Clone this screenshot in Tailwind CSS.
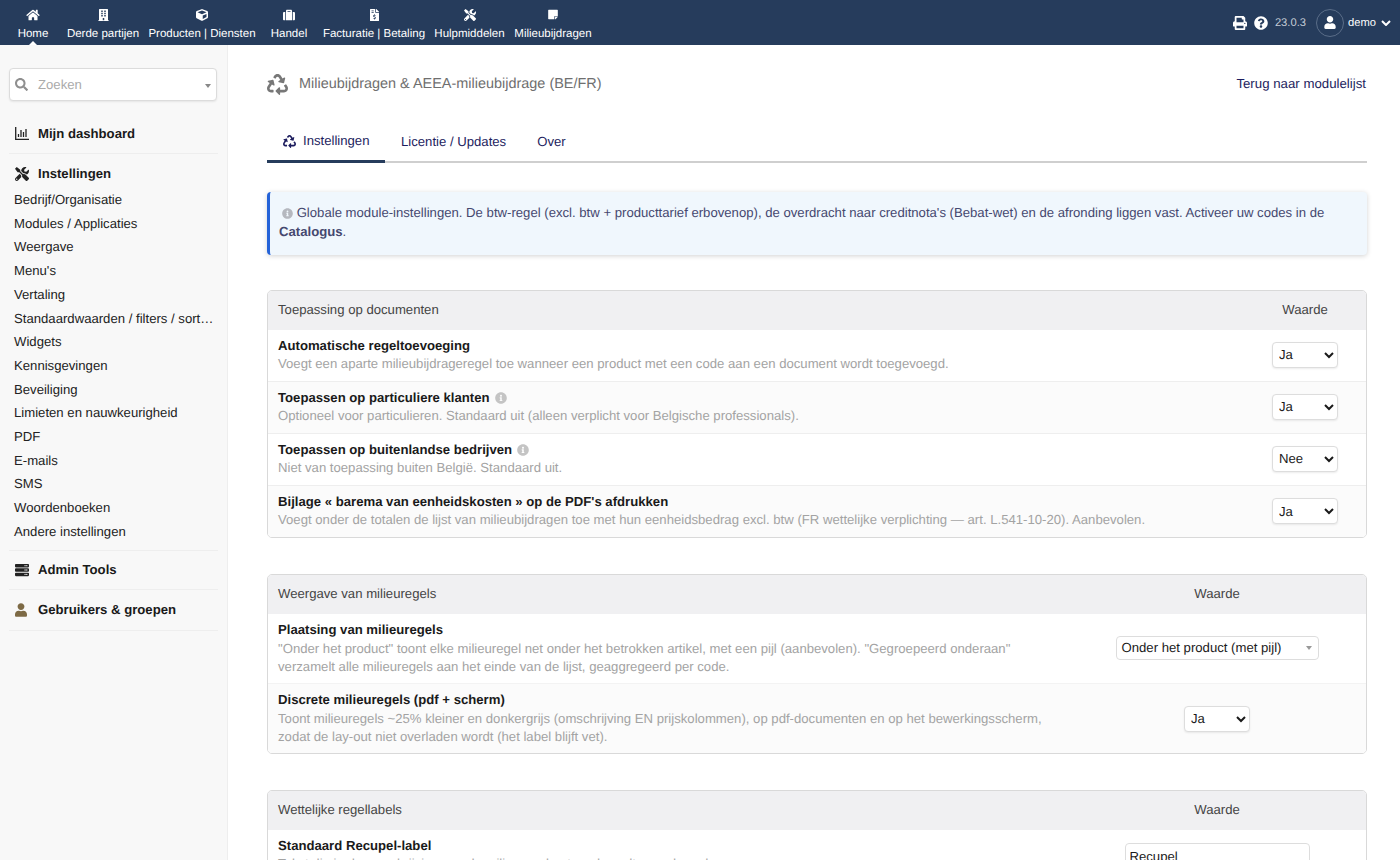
<!DOCTYPE html>
<html lang="nl">
<head>
<meta charset="utf-8">
<title>Milieubijdragen</title>
<script src="https://cdn.jsdelivr.net/npm/@tailwindcss/browser@4"></script>
</head>
<body class="h-[860px] w-[1400px] overflow-hidden bg-white font-['Liberation_Sans',Arial,sans-serif] text-[13.15px] text-[#1a1a1a] [text-rendering:geometricPrecision]">
<header class="flex h-[45px] items-start justify-between bg-[#263c5c] text-white">
  <nav class="ml-2 flex text-[11.5px]">
    <a class="relative flex h-[45px] w-[50px] flex-col items-center pt-[9px]">
      <svg class="h-[12px] w-[14px] fill-white" viewBox="0 0 576 512"><path d="M280.37 148.26L96 300.11V464a16 16 0 0 0 16 16l112.06-.29a16 16 0 0 0 15.92-16V368a16 16 0 0 1 16-16h64a16 16 0 0 1 16 16v95.64a16 16 0 0 0 16 16.05L464 480a16 16 0 0 0 16-16V300L295.67 148.26a12.19 12.19 0 0 0-15.3 0zM571.6 251.47L488 182.56V44.05a12 12 0 0 0-12-12h-56a12 12 0 0 0-12 12v72.61L318.47 43a48 48 0 0 0-61 0L4.34 251.47a12 12 0 0 0-1.6 16.9l25.5 31A12 12 0 0 0 45.15 301l235.22-193.74a12.19 12.19 0 0 1 15.3 0L530.9 301a12 12 0 0 0 16.9-1.6l25.5-31a12 12 0 0 0-1.7-16.93z"/></svg>
      <span class="mt-[5px] leading-[16px]">Home</span>
      <span class="absolute bottom-0 left-1/2 -ml-[4px] h-0 w-0 border-x-[4px] border-b-[4px] border-x-transparent border-b-white"></span>
    </a>
    <a class="flex h-[45px] w-[90px] flex-col items-center pt-[9px]">
      <svg class="h-[12px] w-[11px] fill-white" viewBox="0 0 448 512"><path d="M436 480h-20V24c0-13.255-10.745-24-24-24H56C42.745 0 32 10.745 32 24v456H12c-6.627 0-12 5.373-12 12v20h448v-20c0-6.627-5.373-12-12-12zM128 76c0-6.627 5.373-12 12-12h40c6.627 0 12 5.373 12 12v40c0 6.627-5.373 12-12 12h-40c-6.627 0-12-5.373-12-12V76zm0 96c0-6.627 5.373-12 12-12h40c6.627 0 12 5.373 12 12v40c0 6.627-5.373 12-12 12h-40c-6.627 0-12-5.373-12-12v-40zm52 148h-40c-6.627 0-12-5.373-12-12v-40c0-6.627 5.373-12 12-12h40c6.627 0 12 5.373 12 12v40c0 6.627-5.373 12-12 12zm76 160h-64v-84c0-6.627 5.373-12 12-12h40c6.627 0 12 5.373 12 12v84zm64-172c0 6.627-5.373 12-12 12h-40c-6.627 0-12-5.373-12-12v-40c0-6.627 5.373-12 12-12h40c6.627 0 12 5.373 12 12v40zm0-96c0 6.627-5.373 12-12 12h-40c-6.627 0-12-5.373-12-12v-40c0-6.627 5.373-12 12-12h40c6.627 0 12 5.373 12 12v40zm0-96c0 6.627-5.373 12-12 12h-40c-6.627 0-12-5.373-12-12V76c0-6.627 5.373-12 12-12h40c6.627 0 12 5.373 12 12v40z"/></svg>
      <span class="mt-[5px] leading-[16px]">Derde partijen</span>
    </a>
    <a class="flex h-[45px] w-[108px] flex-col items-center pt-[9px]">
      <svg class="h-[12px] w-[12px] fill-white" viewBox="0 0 512 512"><path d="M239.1 6.3l-208 78c-18.7 7-31.1 25-31.1 45v225.1c0 18.2 10.3 34.8 26.5 42.9l208 104c13.5 6.8 29.4 6.8 42.9 0l208-104c16.3-8.1 26.5-24.8 26.5-42.9V129.3c0-20-12.4-37.9-31.1-44.9l-208-78C262 2.2 250 2.2 239.1 6.3zM256 68.4l192 72v1.1l-192 78-192-78v-1.1l192-72zm32 356V275.5l160-65v133.9l-160 80z"/></svg>
      <span class="mt-[5px] leading-[16px] whitespace-nowrap">Producten | Diensten</span>
    </a>
    <a class="flex h-[45px] w-[66px] flex-col items-center pt-[9px]">
      <svg class="h-[12px] w-[12px] fill-white" viewBox="0 0 512 512"><path d="M128 480h256V80c0-26.5-21.5-48-48-48H176c-26.5 0-48 21.5-48 48v400zm64-384h128v32H192V96zm320 80v256c0 26.5-21.5 48-48 48h-48V128h48c26.5 0 48 21.5 48 48zM96 480H48c-26.5 0-48-21.5-48-48V176c0-26.5 21.5-48 48-48h48v352z"/></svg>
      <span class="mt-[5px] leading-[16px]">Handel</span>
    </a>
    <a class="flex h-[45px] w-[104px] flex-col items-center pt-[9px]">
      <svg class="h-[12px] w-[9px] fill-white" viewBox="0 0 384 512"><path d="M377 105L279.1 7c-4.5-4.5-10.6-7-17-7H256v128h128v-6.1c0-6.3-2.5-12.4-7-16.9zM224 136V0H24C10.7 0 0 10.7 0 24v464c0 13.3 10.7 24 24 24h336c13.3 0 24-10.7 24-24V160H248c-13.2 0-24-10.8-24-24zM64 72c0-4.42 3.58-8 8-8h80c4.42 0 8 3.58 8 8v16c0 4.42-3.58 8-8 8H72c-4.42 0-8-3.58-8-8V72zm0 80v-16c0-4.42 3.58-8 8-8h80c4.42 0 8 3.58 8 8v16c0 4.42-3.58 8-8 8H72c-4.42 0-8-3.58-8-8zm144 263.88V440c0 4.42-3.58 8-8 8h-16c-4.42 0-8-3.58-8-8v-24.29c-11.29-.58-22.27-4.52-31.37-11.35-3.9-2.93-4.1-8.77-.57-12.14l11.75-11.21c2.77-2.64 6.89-2.76 10.13-.73 3.87 2.42 8.26 3.72 12.82 3.72h28.11c6.5 0 11.8-5.92 11.8-13.19 0-5.95-3.61-11.19-8.77-12.73l-45-13.5c-18.59-5.58-31.58-23.42-31.58-43.39 0-24.52 19.05-44.44 42.67-45.07V232c0-4.42 3.58-8 8-8h16c4.42 0 8 3.58 8 8v24.29c11.29.58 22.27 4.51 31.37 11.35 3.9 2.93 4.1 8.77.57 12.14l-11.75 11.21c-2.77 2.64-6.89 2.76-10.13.73-3.87-2.43-8.26-3.72-12.82-3.72h-28.11c-6.5 0-11.8 5.92-11.8 13.19 0 5.95 3.61 11.19 8.77 12.73l45 13.5c18.59 5.58 31.58 23.42 31.58 43.39 0 24.53-19.05 44.44-42.67 45.07z"/></svg>
      <span class="mt-[5px] leading-[16px] whitespace-nowrap">Facturatie | Betaling</span>
    </a>
    <a class="flex h-[45px] w-[87px] flex-col items-center pt-[9px]">
      <svg class="h-[12px] w-[12px] fill-white" viewBox="0 0 512 512"><path d="M501.1 395.7L384 278.6c-23.1-23.1-57.6-27.6-85.4-13.9L192 158.1V96L64 0 0 64l96 128h62.1l106.6 106.6c-13.6 27.8-9.2 62.3 13.9 85.4l117.1 117.1c14.6 14.6 38.2 14.6 52.7 0l52.7-52.7c14.5-14.6 14.5-38.2 0-52.7zM331.7 225c28.3 0 54.9 11 74.9 31l19.4 19.4c15.8-6.9 30.8-16.5 43.8-29.5 37.1-37.1 49.7-89.3 37.9-136.7-2.2-9-13.5-12.1-20.1-5.5l-74.4 74.4-67.9-11.3L334 98.9l74.4-74.4c6.6-6.6 3.4-17.9-5.7-20.2-47.4-11.7-99.6.9-136.6 37.9-28.5 28.5-41.9 66.1-41.2 103.6l82.1 82.1c8.1-1.9 16.5-2.9 24.7-2.9zm-103.9 82l-56.7-56.7L18.7 402.8c-25 25-25 65.5 0 90.5s65.5 25 90.5 0l123.6-123.6c-7.6-19.9-9.9-41.6-5-62.7zM64 472c-13.2 0-24-10.8-24-24 0-13.3 10.7-24 24-24s24 10.7 24 24c0 13.2-10.7 24-24 24z"/></svg>
      <span class="mt-[5px] leading-[16px]">Hulpmiddelen</span>
    </a>
    <a class="flex h-[45px] w-[80px] flex-col items-center pt-[9px]">
      <svg class="h-[11px] w-[10px] fill-white" viewBox="0 0 448 512"><path d="M312 320h136V56c0-13.3-10.7-24-24-24H24C10.7 32 0 42.7 0 56v400c0 13.3 10.7 24 24 24h264V344c0-13.2 10.8-24 24-24zm129 55l-98 98c-4.5 4.5-10.6 7-17 7h-6V352h128v6.1c0 6.3-2.5 12.4-7 16.9z"/></svg>
      <span class="mt-[6px] leading-[16px]">Milieubijdragen</span>
    </a>
  </nav>
  <div class="flex h-[45px] items-center pr-[9px]">
    <svg class="h-[14px] w-[14px] fill-white" viewBox="0 0 512 512"><path d="M448 192V77.25c0-8.49-3.37-16.62-9.37-22.63L393.37 9.37c-6-6-14.14-9.37-22.63-9.37H96C78.33 0 64 14.33 64 32v160c-35.35 0-64 28.65-64 64v112c0 8.84 7.16 16 16 16h48v96c0 17.67 14.33 32 32 32h320c17.67 0 32-14.33 32-32v-96h48c8.84 0 16-7.16 16-16V256c0-35.35-28.65-64-64-64zm-64 256H128v-96h256v96zm0-224H128V64h192v48c0 8.84 7.16 16 16 16h48v96zm48 72c-13.25 0-24-10.75-24-24 0-13.26 10.75-24 24-24s24 10.74 24 24c0 13.25-10.75 24-24 24z"/></svg>
    <svg class="ml-[7px] h-[14px] w-[14px] fill-white" viewBox="0 0 512 512"><path d="M504 256c0 136.997-111.043 248-248 248S8 392.997 8 256C8 119.083 119.043 8 256 8s248 111.083 248 248zM262.655 90c-54.497 0-89.255 22.957-116.549 63.758-3.536 5.286-2.353 12.415 2.715 16.258l34.699 26.31c5.205 3.947 12.621 3.008 16.665-2.122 17.864-22.658 30.113-35.797 57.303-35.797 20.429 0 45.698 13.148 45.698 32.958 0 14.976-12.363 22.667-32.534 33.976C247.128 238.528 216 254.941 216 296v4c0 6.627 5.373 12 12 12h56c6.627 0 12-5.373 12-12v-1.333c0-28.462 83.186-29.647 83.186-106.667 0-58.002-60.165-102-116.531-102zM256 338c-25.365 0-46 20.635-46 46 0 25.364 20.635 46 46 46s46-20.636 46-46c0-25.365-20.635-46-46-46z"/></svg>
    <span class="ml-[7px] mt-[1px] text-[11.2px] text-[#c3cad5]">23.0.3</span>
    <span class="ml-[10px] flex h-[28px] w-[28px] items-center justify-center rounded-full border border-[#5a6d88]">
      <svg class="h-[13px] w-[12px] fill-white" viewBox="0 0 448 512"><path d="M224 256c70.7 0 128-57.3 128-128S294.7 0 224 0 96 57.3 96 128s57.3 128 128 128zm89.6 32h-16.7c-22.2 10.2-46.9 16-72.9 16s-50.6-5.8-72.9-16h-16.7C60.2 288 0 348.2 0 422.4V464c0 26.5 21.5 48 48 48h352c26.5 0 48-21.5 48-48v-41.6c0-74.2-60.2-134.4-134.4-134.4z"/></svg>
    </span>
    <span class="ml-[4px] mt-[2px] text-[11.2px]">demo</span>
    <svg class="ml-[5px] h-[6px] w-[10px] stroke-white stroke-[2] fill-none" viewBox="0 0 10 6"><path d="M1 1l4 4 4-4"/></svg>
  </div>
</header>
<div class="flex h-[815px]">
  <aside class="h-full w-[228px] shrink-0 border-r border-[#eeeeee] bg-[#f8f8f8] px-[9px] pt-[23px]">
    <div class="flex h-[33px] w-[208px] items-center rounded-[4px] border border-[#dcdcdc] bg-white shadow-[0_1px_2px_rgba(0,0,0,0.08)]">
      <svg class="ml-[5px] h-[13px] w-[13px] fill-[#8f8f8f]" viewBox="0 0 512 512"><path d="M505 442.7L405.3 343c-4.5-4.5-10.6-7-17-7H372c27.6-35.3 44-79.7 44-128C416 93.1 322.9 0 208 0S0 93.1 0 208s93.1 208 208 208c48.3 0 92.7-16.4 128-44v16.3c0 6.4 2.5 12.5 7 17l99.7 99.7c9.4 9.4 24.6 9.4 33.9 0l28.3-28.3c9.4-9.4 9.4-24.6.1-34zM208 336c-70.7 0-128-57.2-128-128 0-70.7 57.2-128 128-128 70.7 0 128 57.2 128 128 0 70.7-57.2 128-128 128z"/></svg>
      <span class="ml-[10px] flex-1 text-[#aaaaaa]">Zoeken</span>
      <span class="mr-[5px] mt-[2px] h-0 w-0 border-x-[3.5px] border-t-[4px] border-x-transparent border-t-[#888888]"></span>
    </div>
    <div class="mt-[13px] flex h-[40px] items-center border-b border-[#eeeeee] font-bold">
      <svg class="ml-[6px] h-[13px] w-[14px] stroke-[#222222] fill-none stroke-[1.3]" viewBox="0 0 14 13"><path d="M.7 0v12.3H14M3.5 10V7M6 10V3M8.5 10V5M11 10V2"/></svg>
      <span class="ml-[9px]">Mijn dashboard</span>
    </div>
    <div class="flex h-[40px] items-center font-bold">
      <svg class="ml-[6px] h-[14px] w-[14px] fill-[#222222]" viewBox="0 0 512 512"><path d="M501.1 395.7L384 278.6c-23.1-23.1-57.6-27.6-85.4-13.9L192 158.1V96L64 0 0 64l96 128h62.1l106.6 106.6c-13.6 27.8-9.2 62.3 13.9 85.4l117.1 117.1c14.6 14.6 38.2 14.6 52.7 0l52.7-52.7c14.5-14.6 14.5-38.2 0-52.7zM331.7 225c28.3 0 54.9 11 74.9 31l19.4 19.4c15.8-6.9 30.8-16.5 43.8-29.5 37.1-37.1 49.7-89.3 37.9-136.7-2.2-9-13.5-12.1-20.1-5.5l-74.4 74.4-67.9-11.3L334 98.9l74.4-74.4c6.6-6.6 3.4-17.9-5.7-20.2-47.4-11.7-99.6.9-136.6 37.9-28.5 28.5-41.9 66.1-41.2 103.6l82.1 82.1c8.1-1.9 16.5-2.9 24.7-2.9zm-103.9 82l-56.7-56.7L18.7 402.8c-25 25-25 65.5 0 90.5s65.5 25 90.5 0l123.6-123.6c-7.6-19.9-9.9-41.6-5-62.7zM64 472c-13.2 0-24-10.8-24-24 0-13.3 10.7-24 24-24s24 10.7 24 24c0 13.2-10.7 24-24 24z"/></svg>
      <span class="ml-[9px]">Instellingen</span>
    </div>
    <ul class="-mt-[6px] pb-[6px] pl-[5px] leading-[23.7px] text-[#222222]">
      <li>Bedrijf/Organisatie</li>
      <li>Modules / Applicaties</li>
      <li>Weergave</li>
      <li>Menu's</li>
      <li>Vertaling</li>
      <li class="w-[200px] truncate">Standaardwaarden / filters / sorteren</li>
      <li>Widgets</li>
      <li>Kennisgevingen</li>
      <li>Beveiliging</li>
      <li>Limieten en nauwkeurigheid</li>
      <li>PDF</li>
      <li>E-mails</li>
      <li>SMS</li>
      <li>Woordenboeken</li>
      <li>Andere instellingen</li>
    </ul>
    <div class="flex h-[40px] items-center border-y border-[#eeeeee] font-bold">
      <svg class="ml-[6px] h-[14px] w-[14px] fill-[#222222]" viewBox="0 0 512 512"><path d="M480 160H32c-17.673 0-32-14.327-32-32V64c0-17.673 14.327-32 32-32h448c17.673 0 32 14.327 32 32v64c0 17.673-14.327 32-32 32zm-48-88c-13.255 0-24 10.745-24 24s10.745 24 24 24 24-10.745 24-24-10.745-24-24-24zm-64 0c-13.255 0-24 10.745-24 24s10.745 24 24 24 24-10.745 24-24-10.745-24-24-24zm112 248H32c-17.673 0-32-14.327-32-32v-64c0-17.673 14.327-32 32-32h448c17.673 0 32 14.327 32 32v64c0 17.673-14.327 32-32 32zm-48-88c-13.255 0-24 10.745-24 24s10.745 24 24 24 24-10.745 24-24-10.745-24-24-24zm-64 0c-13.255 0-24 10.745-24 24s10.745 24 24 24 24-10.745 24-24-10.745-24-24-24zm112 248H32c-17.673 0-32-14.327-32-32v-64c0-17.673 14.327-32 32-32h448c17.673 0 32 14.327 32 32v64c0 17.673-14.327 32-32 32zm-48-88c-13.255 0-24 10.745-24 24s10.745 24 24 24 24-10.745 24-24-10.745-24-24-24zm-64 0c-13.255 0-24 10.745-24 24s10.745 24 24 24 24-10.745 24-24-10.745-24-24-24z"/></svg>
      <span class="ml-[9px]">Admin Tools</span>
    </div>
    <div class="flex h-[41px] items-center border-b border-[#eeeeee] font-bold">
      <svg class="ml-[6px] h-[14px] w-[12px] fill-[#7d6a45]" viewBox="0 0 448 512"><path d="M224 256c70.7 0 128-57.3 128-128S294.7 0 224 0 96 57.3 96 128s57.3 128 128 128zm89.6 32h-16.7c-22.2 10.2-46.9 16-72.9 16s-50.6-5.8-72.9-16h-16.7C60.2 288 0 348.2 0 422.4V464c0 26.5 21.5 48 48 48h352c26.5 0 48-21.5 48-48v-41.6c0-74.2-60.2-134.4-134.4-134.4z"/></svg>
      <span class="ml-[11px]">Gebruikers &amp; groepen</span>
    </div>
  </aside>
  <main class="h-full min-w-0 flex-1 overflow-hidden pl-[39px] pr-[33px]">
    <div class="flex h-[78px] items-center justify-between pt-[2px]">
      <div class="flex items-center">
        <svg class="h-[21px] w-[21px] fill-[#777777]" viewBox="0 0 512 512"><path d="M184.561 261.903c3.232 13.997-12.123 24.635-24.068 17.168l-40.736-25.455-50.867 81.402C55.606 356.273 70.96 384 96.012 384H148c6.627 0 12 5.373 12 12v40c0 6.627-5.373 12-12 12H96.115c-75.334 0-121.302-83.048-81.408-146.88l50.822-81.388-40.725-25.448c-12.081-7.547-8.966-25.961 4.879-29.158l110.237-25.45c8.611-1.988 17.201 3.381 19.189 11.99l25.451 110.237zm98.561-182.915l41.289 66.076-40.74 25.457c-12.051 7.528-9 25.953 4.879 29.158l110.237 25.45c8.672 1.999 17.215-3.438 19.189-11.99l25.45-110.237c3.197-13.844-11.99-24.719-24.068-17.168l-40.687 25.424-41.263-66.082c-37.521-60.033-125.209-60.171-162.816 0l-17.963 28.766c-3.51 5.62-1.8 13.021 3.82 16.533l33.919 21.195c5.62 3.512 13.024 1.803 16.536-3.817l17.961-28.743c12.712-20.341 41.973-19.676 54.257-.022zM497.288 301.12l-27.515-44.065c-3.511-5.623-10.916-7.334-16.538-3.821l-33.861 21.159c-5.62 3.512-7.33 10.915-3.818 16.536l27.564 44.112c13.257 21.211-2.057 48.96-27.136 48.96H320V336.02c0-14.213-17.242-21.383-27.313-11.313l-80 79.981c-6.249 6.248-6.249 16.379 0 22.627l80 79.989C302.689 517.308 320 510.3 320 495.989V448h95.88c75.274 0 121.335-82.997 81.408-146.88z"/></svg>
        <span class="ml-[11px] text-[14.45px] text-[#6f6f6f]">Milieubijdragen &amp; AEEA-milieubijdrage (BE/FR)</span>
      </div>
      <a class="mb-[3px] mr-[1px] text-[13.25px] text-[#1d1d5e]">Terug naar modulelijst</a>
    </div>
    <div class="flex h-[40px] items-end border-b-2 border-[#cfcfcf] text-[#1d1d5e]">
      <a class="-mb-[2px] flex h-[41px] w-[118px] items-center border-b-[3px] border-[#263c5c] pl-[16px]">
        <svg class="h-[13px] w-[13px] fill-[#1d1d5e]" viewBox="0 0 512 512"><path d="M184.561 261.903c3.232 13.997-12.123 24.635-24.068 17.168l-40.736-25.455-50.867 81.402C55.606 356.273 70.96 384 96.012 384H148c6.627 0 12 5.373 12 12v40c0 6.627-5.373 12-12 12H96.115c-75.334 0-121.302-83.048-81.408-146.88l50.822-81.388-40.725-25.448c-12.081-7.547-8.966-25.961 4.879-29.158l110.237-25.45c8.611-1.988 17.201 3.381 19.189 11.99l25.451 110.237zm98.561-182.915l41.289 66.076-40.74 25.457c-12.051 7.528-9 25.953 4.879 29.158l110.237 25.45c8.672 1.999 17.215-3.438 19.189-11.99l25.45-110.237c3.197-13.844-11.99-24.719-24.068-17.168l-40.687 25.424-41.263-66.082c-37.521-60.033-125.209-60.171-162.816 0l-17.963 28.766c-3.51 5.62-1.8 13.021 3.82 16.533l33.919 21.195c5.62 3.512 13.024 1.803 16.536-3.817l17.961-28.743c12.712-20.341 41.973-19.676 54.257-.022zM497.288 301.12l-27.515-44.065c-3.511-5.623-10.916-7.334-16.538-3.821l-33.861 21.159c-5.62 3.512-7.33 10.915-3.818 16.536l27.564 44.112c13.257 21.211-2.057 48.96-27.136 48.96H320V336.02c0-14.213-17.242-21.383-27.313-11.313l-80 79.981c-6.249 6.248-6.249 16.379 0 22.627l80 79.989C302.689 517.308 320 510.3 320 495.989V448h95.88c75.274 0 121.335-82.997 81.408-146.88z"/></svg>
        <span class="ml-[7px]">Instellingen</span>
      </a>
      <a class="flex h-[39px] items-center pl-[16px]">Licentie / Updates</a>
      <a class="flex h-[39px] items-center pl-[31px]">Over</a>
    </div>
    <div class="mt-[29px] rounded-[4px] border-l-[3px] border-[#2563d8] bg-[#f0f7fd] pb-[14px] pl-[9px] pr-[20px] pt-[11px] leading-[19px] text-[#45486f] shadow-[0_1px_5px_rgba(0,0,0,0.18)]">
      <svg class="mb-[1px] ml-[3px] inline h-[11px] w-[11px] fill-[#b5b8bf]" viewBox="0 0 512 512"><path d="M256 8C119.043 8 8 119.083 8 256c0 136.997 111.043 248 248 248s248-111.003 248-248C504 119.083 392.957 8 256 8zm0 110c23.196 0 42 18.804 42 42s-18.804 42-42 42-42-18.804-42-42 18.804-42 42-42zm56 254c0 6.627-5.373 12-12 12h-88c-6.627 0-12-5.373-12-12v-24c0-6.627 5.373-12 12-12h12v-64h-12c-6.627 0-12-5.373-12-12v-24c0-6.627 5.373-12 12-12h64c6.627 0 12 5.373 12 12v100h12c6.627 0 12 5.373 12 12v24z"/></svg>
      Globale module-instellingen. De btw-regel (excl. btw + producttarief erbovenop), de overdracht naar creditnota's (Bebat-wet) en de afronding liggen vast. Activeer uw codes in de <b>Catalogus</b>.
    </div>

    <section class="mt-[35px] overflow-hidden rounded-[5px] border border-[#d9d9d9]">
      <div class="flex h-[39px] items-center bg-[#f0f0f2] pb-[1px] text-[#444444]">
        <span class="flex-1 pl-[10px]">Toepassing op documenten</span>
        <span class="w-[122px] text-center">Waarde</span>
      </div>
      <div class="flex h-[52px] border-b border-[#eeeeee] bg-white">
        <div class="flex-1 pl-[10px] pt-[7px] leading-[18px]"><b>Automatische regeltoevoeging</b><p class="text-[#a3a3a3]">Voegt een aparte milieubijdrageregel toe wanneer een product met een code aan een document wordt toegevoegd.</p></div>
        <div class="flex w-[122px] items-center justify-center pb-[2px]"><select class="h-[26px] w-[66px] rounded-[4px] border border-[#dddddd] bg-white pl-[2px] shadow-[0_1px_2px_rgba(0,0,0,0.08)] [text-rendering:geometricPrecision]"><option>Ja</option></select></div>
      </div>
      <div class="flex h-[52px] border-b border-[#eeeeee] bg-[#fbfbfb]">
        <div class="flex-1 pl-[10px] pt-[7px] leading-[18px]"><b>Toepassen op particuliere klanten</b><svg class="mb-[1px] ml-[5px] inline h-[12px] w-[12px] fill-[#c4c4c4]" viewBox="0 0 512 512"><path d="M256 8C119.043 8 8 119.083 8 256c0 136.997 111.043 248 248 248s248-111.003 248-248C504 119.083 392.957 8 256 8zm0 110c23.196 0 42 18.804 42 42s-18.804 42-42 42-42-18.804-42-42 18.804-42 42-42zm56 254c0 6.627-5.373 12-12 12h-88c-6.627 0-12-5.373-12-12v-24c0-6.627 5.373-12 12-12h12v-64h-12c-6.627 0-12-5.373-12-12v-24c0-6.627 5.373-12 12-12h64c6.627 0 12 5.373 12 12v100h12c6.627 0 12 5.373 12 12v24z"/></svg><p class="text-[#a3a3a3]">Optioneel voor particulieren. Standaard uit (alleen verplicht voor Belgische professionals).</p></div>
        <div class="flex w-[122px] items-center justify-center pb-[2px]"><select class="h-[26px] w-[66px] rounded-[4px] border border-[#dddddd] bg-white pl-[2px] shadow-[0_1px_2px_rgba(0,0,0,0.08)] [text-rendering:geometricPrecision]"><option>Ja</option></select></div>
      </div>
      <div class="flex h-[52px] border-b border-[#eeeeee] bg-white">
        <div class="flex-1 pl-[10px] pt-[7px] leading-[18px]"><b>Toepassen op buitenlandse bedrijven</b><svg class="mb-[1px] ml-[5px] inline h-[12px] w-[12px] fill-[#c4c4c4]" viewBox="0 0 512 512"><path d="M256 8C119.043 8 8 119.083 8 256c0 136.997 111.043 248 248 248s248-111.003 248-248C504 119.083 392.957 8 256 8zm0 110c23.196 0 42 18.804 42 42s-18.804 42-42 42-42-18.804-42-42 18.804-42 42-42zm56 254c0 6.627-5.373 12-12 12h-88c-6.627 0-12-5.373-12-12v-24c0-6.627 5.373-12 12-12h12v-64h-12c-6.627 0-12-5.373-12-12v-24c0-6.627 5.373-12 12-12h64c6.627 0 12 5.373 12 12v100h12c6.627 0 12 5.373 12 12v24z"/></svg><p class="text-[#a3a3a3]">Niet van toepassing buiten België. Standaard uit.</p></div>
        <div class="flex w-[122px] items-center justify-center pb-[2px]"><select class="h-[26px] w-[66px] rounded-[4px] border border-[#dddddd] bg-white pl-[2px] shadow-[0_1px_2px_rgba(0,0,0,0.08)] [text-rendering:geometricPrecision]"><option>Nee</option></select></div>
      </div>
      <div class="flex h-[51px] bg-[#fbfbfb]">
        <div class="flex-1 pl-[10px] pt-[7px] leading-[18px]"><b>Bijlage « barema van eenheidskosten » op de PDF's afdrukken</b><p class="text-[#a3a3a3]">Voegt onder de totalen de lijst van milieubijdragen toe met hun eenheidsbedrag excl. btw (FR wettelijke verplichting — art. L.541-10-20). Aanbevolen.</p></div>
        <div class="flex w-[122px] items-center justify-center pb-[1px]"><select class="h-[26px] w-[66px] rounded-[4px] border border-[#dddddd] bg-white pl-[2px] shadow-[0_1px_2px_rgba(0,0,0,0.08)] [text-rendering:geometricPrecision]"><option>Ja</option></select></div>
      </div>
    </section>

    <section class="mt-[36px] overflow-hidden rounded-[5px] border border-[#d9d9d9]">
      <div class="flex h-[39px] items-center bg-[#f0f0f2] pb-[2px] text-[#444444]">
        <span class="flex-1 pl-[10px]">Weergave van milieuregels</span>
        <span class="w-[298px] text-center">Waarde</span>
      </div>
      <div class="flex h-[70px] border-b border-[#f3f3f3] bg-white">
        <div class="flex-1 pl-[10px] pr-[10px] pt-[7px] leading-[18.5px]"><b>Plaatsing van milieuregels</b><p class="text-[#a3a3a3]">"Onder het product" toont elke milieuregel net onder het betrokken artikel, met een pijl (aanbevolen). "Gegroepeerd onderaan" verzamelt alle milieuregels aan het einde van de lijst, geaggregeerd per code.</p></div>
        <div class="flex w-[298px] items-center justify-center pb-[1px]"><div class="flex h-[24px] w-[203px] items-center justify-between rounded-[4px] border border-[#dddddd] bg-white pl-[5px] pr-[6px]"><span>Onder het product (met pijl)</span><span class="h-0 w-0 border-x-[3.5px] border-t-[4px] border-x-transparent border-t-[#999999]"></span></div></div>
      </div>
      <div class="flex h-[69px] bg-[#fbfbfb]">
        <div class="flex-1 pl-[10px] pr-[10px] pt-[7px] leading-[18.5px]"><b>Discrete milieuregels (pdf + scherm)</b><p class="text-[#a3a3a3]">Toont milieuregels ~25% kleiner en donkergrijs (omschrijving EN prijskolommen), op pdf-documenten en op het bewerkingsscherm, zodat de lay-out niet overladen wordt (het label blijft vet).</p></div>
        <div class="flex w-[298px] items-center justify-center"><select class="h-[26px] w-[66px] rounded-[4px] border border-[#dddddd] bg-white pl-[2px] shadow-[0_1px_2px_rgba(0,0,0,0.08)] [text-rendering:geometricPrecision]"><option>Ja</option></select></div>
      </div>
    </section>

    <section class="mt-[36px] overflow-hidden rounded-[5px] border border-[#d9d9d9]">
      <div class="flex h-[39px] items-center bg-[#f0f0f2] pb-[1px] text-[#444444]">
        <span class="flex-1 pl-[10px]">Wettelijke regellabels</span>
        <span class="w-[298px] text-center">Waarde</span>
      </div>
      <div class="flex h-[70px] bg-white">
        <div class="flex-1 pl-[10px] pr-[10px] pt-[7px] leading-[18px]"><b>Standaard Recupel-label</b><p class="text-[#a3a3a3]">Tekst die in de omschrijving van de milieuregel getoond wordt voor de code.</p></div>
        <div class="flex w-[298px] justify-center pt-[13px]"><input value="Recupel" class="h-[26px] w-[185px] rounded-[4px] border border-[#dddddd] bg-white pl-[4px] [text-rendering:geometricPrecision]"></div>
      </div>
    </section>
  </main>
</div>
</body>
</html>
